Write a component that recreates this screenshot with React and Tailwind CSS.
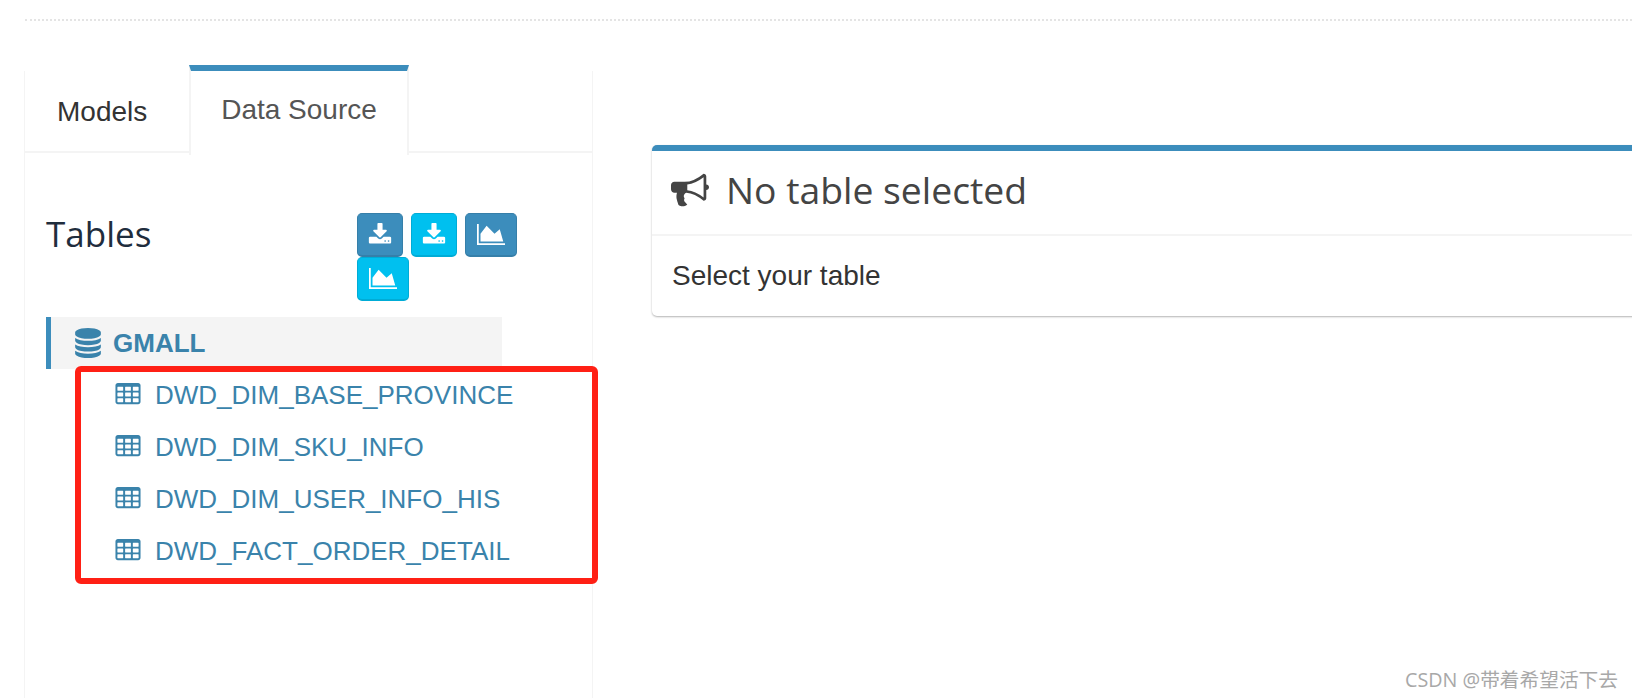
import React from 'react';

const sans = 'font-["Liberation_Sans",Arial,sans-serif]';

const paths = {
  download:
    'M1344 1344q0-26-19-45t-45-19-45 19-19 45 19 45 45 19 45-19 19-45zm256 0q0-26-19-45t-45-19-45 19-19 45 19 45 45 19 45-19 19-45zm128-224v320q0 40-28 68t-68 28h-1472q-40 0-68-28t-28-68v-320q0-40 28-68t68-28h465l135 136q58 56 136 56t136-56l136-136h464q40 0 68 28t28 68zm-325-569q17 41-14 70l-448 448q-18 19-45 19t-45-19l-448-448q-31-29-14-70 17-39 59-39h256v-448q0-26 19-45t45-19h256q26 0 45 19t19 45v448h256q42 0 59 39z',
  database:
    'M896 768q237 0 443-43t325-127v170q0 69-103 128t-280 93.5-385 34.5-385-34.5-280-93.5-103-128v-170q119 84 325 127t443 43zm0 768q237 0 443-43t325-127v170q0 69-103 128t-280 93.5-385 34.5-385-34.5-280-93.5-103-128v-170q119 84 325 127t443 43zm0-384q237 0 443-43t325-127v170q0 69-103 128t-280 93.5-385 34.5-385-34.5-280-93.5-103-128v-170q119 84 325 127t443 43zm0-1152q208 0 385 34.5t280 93.5 103 128v128q0 69-103 128t-280 93.5-385 34.5-385-34.5-280-93.5-103-128v-128q0-69 103-128t280-93.5 385-34.5z',
  table:
    'M576 1376v-192q0-14-9-23t-23-9h-320q-14 0-23 9t-9 23v192q0 14 9 23t23 9h320q14 0 23-9t9-23zm0-384v-192q0-14-9-23t-23-9h-320q-14 0-23 9t-9 23v192q0 14 9 23t23 9h320q14 0 23-9t9-23zm512 384v-192q0-14-9-23t-23-9h-320q-14 0-23 9t-9 23v192q0 14 9 23t23 9h320q14 0 23-9t9-23zm-512-768v-192q0-14-9-23t-23-9h-320q-14 0-23 9t-9 23v192q0 14 9 23t23 9h320q14 0 23-9t9-23zm512 384v-192q0-14-9-23t-23-9h-320q-14 0-23 9t-9 23v192q0 14 9 23t23 9h320q14 0 23-9t9-23zm512 384v-192q0-14-9-23t-23-9h-320q-14 0-23 9t-9 23v192q0 14 9 23t23 9h320q14 0 23-9t9-23zm-512-768v-192q0-14-9-23t-23-9h-320q-14 0-23 9t-9 23v192q0 14 9 23t23 9h320q14 0 23-9t9-23zm512 384v-192q0-14-9-23t-23-9h-320q-14 0-23 9t-9 23v192q0 14 9 23t23 9h320q14 0 23-9t9-23zm0-384v-192q0-14-9-23t-23-9h-320q-14 0-23 9t-9 23v192q0 14 9 23t23 9h320q14 0 23-9t9-23zm128-320v1088q0 66-47 113t-113 47h-1344q-66 0-113-47t-47-113v-1088q0-66 47-113t113-47h1344q66 0 113 47t47 113z',
  bullhorn:
    'M1664 640q53 0 90.5 37.5t37.5 90.5-37.5 90.5-90.5 37.5v384q0 52-38 90t-90 38q-417-347-812-380-58 19-91 66t-31 100.5 40 92.5q-20 33-23 65.5t6 58 33.5 55 48 50 61.5 50.5q-29 58-111.5 83t-168.5 11.5-132-55.5q-7-23-29.5-87.5t-32-94.5-23-89-15-101 3.5-98.5 22-110.5h-122q-66 0-113-47t-47-113v-192q0-66 47-113t113-47h480q435 0 896-384 52 0 90 38t38 90v384zm-128 604v-954q-394 302-768 343v270q377 42 768 341z',
  area: 'M2048 1536v128h-2048v-1536h128v1408h1920zm-384-1024l256 896h-1664v-576l448-576 576 576z',
};

const Icon = ({ name, className, box = '0 0 1792 1792' }) => (
  <svg viewBox={box} className={className} fill="currentColor">
    <path d={paths[name]} />
  </svg>
);

const tables = ['DWD_DIM_BASE_PROVINCE', 'DWD_DIM_SKU_INFO', 'DWD_DIM_USER_INFO_HIS', 'DWD_FACT_ORDER_DETAIL'];

const ToolButton = ({ icon, tone, width }) => (
  <button
    className={`flex h-[44px] items-center justify-center rounded-[5px] border border-b-2 text-white ${width} ${
      tone === 'primary' ? 'border-[#367fa9] bg-[#3c8dbc]' : 'border-[#00acd6] bg-[#00c0ef]'
    }`}
  >
    {icon === 'area' ? (
      <Icon name="area" box="0 0 2048 1792" className="h-[25px] w-[28px]" />
    ) : (
      <Icon name="download" className="h-[24px] w-[24px]" />
    )}
  </button>
);

const App = () => {
  return (
    <div className={`relative h-[698px] w-[1632px] overflow-hidden bg-white ${sans}`}>
      <div className="ml-[25px] mt-[19px] border-t-2 border-dotted border-[#e4e4e4]" />

      <div className="ml-[24px] mt-[50px] flex items-start">
        {/* Left tabs panel */}
        <div className="h-[627px] w-[569px] shrink-0 border-x border-[#f4f4f4]">
          <div className="-mt-[6px] flex h-[88px] border-b-2 border-[#f4f4f4]">
            <div className="mt-[6px] flex h-[80px] w-[164px] items-center pl-[32px] pt-[2px] text-[28px] text-[#333]">
              Models
            </div>
            <div className="-mb-[2px] flex h-[90px] w-[220px] items-center justify-center border-x-2 border-t-[6px] border-x-[#f4f4f4] border-t-[#3c8dbc] bg-white pb-[6px] text-[28px] text-[#555]">
              Data Source
            </div>
          </div>

          <div className="pl-[21px] pt-[60px]">
            <div className="flex h-[104px] items-start">
              <h3 className='w-[311px] pt-[1px] font-["Open_Sans",sans-serif] text-[35px] leading-[40px] text-[#1f2d3d]'>Tables</h3>
              <div className="flex w-[170px] flex-wrap gap-x-[8px]">
                <ToolButton icon="download" tone="primary" width="w-[46px]" />
                <ToolButton icon="download" tone="info" width="w-[46px]" />
                <ToolButton icon="area" tone="primary" width="w-[52px]" />
                <ToolButton icon="area" tone="info" width="w-[52px]" />
              </div>
            </div>

            <div className="flex h-[52px] w-[456px] items-center border-l-[5px] border-[#3c8dbc] bg-[#f4f4f4] pl-[22px] text-[#3a83ab]">
              <Icon name="database" className="h-[30px] w-[30px]" />
              <span className="ml-[10px] text-[26px] font-bold">GMALL</span>
            </div>

            <ul>
              {tables.map((name) => (
                <li key={name} className="flex h-[52px] items-center pl-[68px] text-[#3a83ab]">
                  <Icon name="table" className="h-[27px] w-[28px] -translate-y-[1px]" />
                  <span className="ml-[13px] text-[26px]">{name}</span>
                </li>
              ))}
            </ul>
          </div>
        </div>

        {/* Right info box */}
        <div className="ml-[59px] mt-[74px] w-[1100px] shrink-0 rounded-[5px] border-t-[6px] border-[#3c8dbc] bg-white shadow-[0_1px_2px_rgba(0,0,0,0.3)]">
          <div className="flex h-[85px] items-center border-b-2 border-[#f4f4f4] pb-[6px] pl-[19px] text-[#444]">
            <Icon name="bullhorn" className="h-[38px] w-[38px]" />
            <span className='ml-[17px] font-["Open_Sans",sans-serif] text-[37.3px] leading-none'>No table selected</span>
          </div>
          <div className="flex h-[80px] items-center pl-[20px] text-[28px] text-[#333]">Select your table</div>
        </div>
      </div>

      {/* Red annotation drawn over the screenshot */}
      <div className="absolute left-[75px] top-[366px] h-[218px] w-[523px] rounded-[6px] border-[6px] border-[#ff2015]" />

      <div className='absolute right-[14px] top-[667px] font-["Open_Sans","Noto_Sans_CJK_SC",sans-serif] text-[19.7px] leading-[26px] text-[#a8a8a8]'>
        CSDN @带着希望活下去
      </div>
    </div>
  );
};

export default App;
